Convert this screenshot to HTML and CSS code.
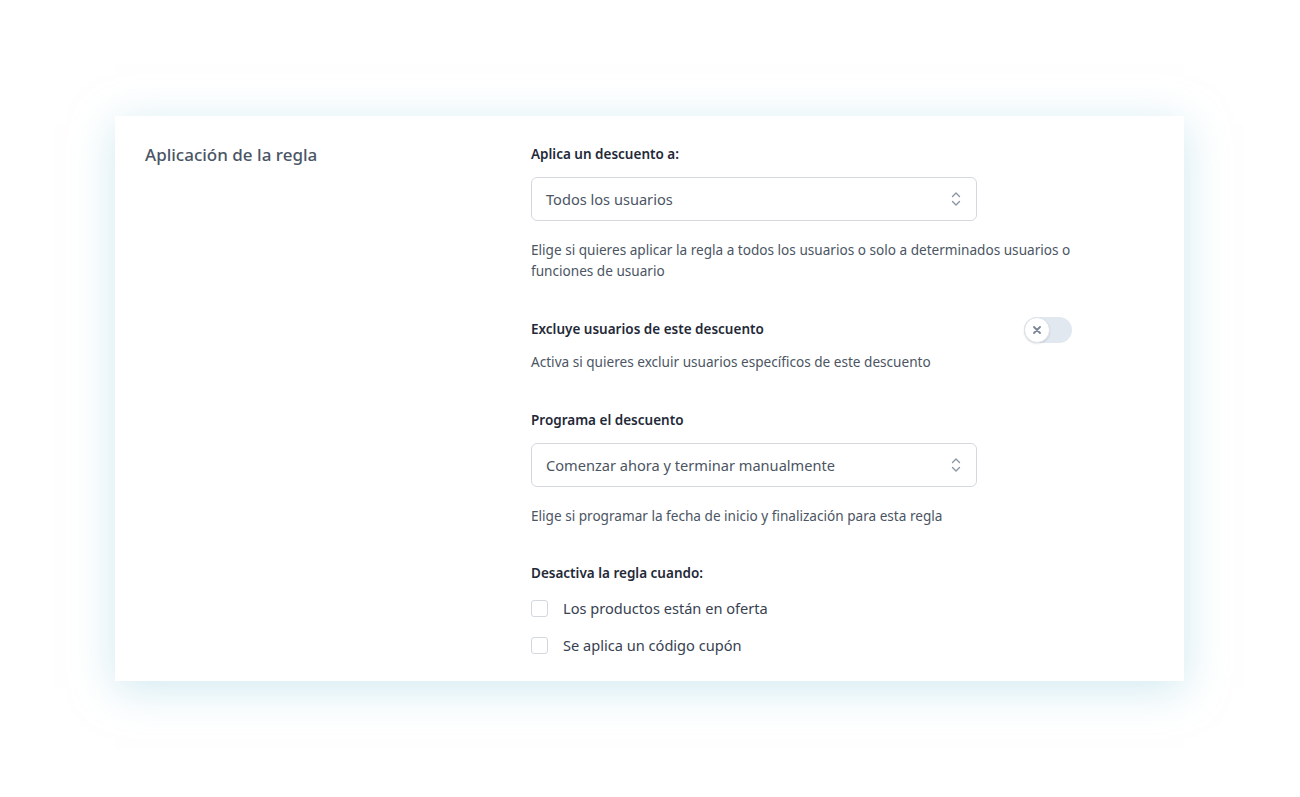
FILE: index.html
```html
<!DOCTYPE html>
<html lang="es">
<head>
    <meta charset="UTF-8">
    <meta name="viewport" content="width=device-width, initial-scale=1.0">
    <title>Aplicación de la regla</title>
    <link rel="stylesheet" href="styles.css">
</head>
<body>
    <div class="card">
        <h2 class="section-title">Aplicación de la regla</h2>

        <div class="fields">
            <div class="field">
                <label class="field-label">Aplica un descuento a:</label>
                <div class="select">
                    <span>Todos los usuarios</span>
                    <svg class="chevrons" width="10" height="16" viewBox="0 0 10 16">
                        <path d="M1.5 5.5 L5 2 L8.5 5.5" />
                        <path d="M1.5 10.5 L5 14 L8.5 10.5" />
                    </svg>
                </div>
                <p class="help">Elige si quieres aplicar la regla a todos los usuarios o solo a determinados usuarios o funciones de usuario</p>
            </div>

            <div class="field">
                <div class="toggle-row">
                    <label class="field-label">Excluye usuarios de este descuento</label>
                    <div class="toggle">
                        <span class="knob">
                            <svg width="8" height="8" viewBox="0 0 8 8">
                                <path d="M1 1 L7 7 M7 1 L1 7" />
                            </svg>
                        </span>
                    </div>
                </div>
                <p class="help help-tight">Activa si quieres excluir usuarios específicos de este descuento</p>
            </div>

            <div class="field field-short">
                <label class="field-label">Programa el descuento</label>
                <div class="select">
                    <span>Comenzar ahora y terminar manualmente</span>
                    <svg class="chevrons" width="10" height="16" viewBox="0 0 10 16">
                        <path d="M1.5 5.5 L5 2 L8.5 5.5" />
                        <path d="M1.5 10.5 L5 14 L8.5 10.5" />
                    </svg>
                </div>
                <p class="help">Elige si programar la fecha de inicio y finalización para esta regla</p>
            </div>

            <div class="field last">
                <label class="field-label">Desactiva la regla cuando:</label>
                <div class="checks">
                    <label class="check"><span class="box"></span>Los productos están en oferta</label>
                    <label class="check"><span class="box"></span>Se aplica un código cupón</label>
                </div>
            </div>
        </div>
    </div>
</body>
</html>
```

FILE: styles.css
```css
html, body {
    height: 100%;
}

body {
    margin: 0;
    padding: 116px 0 0 115px;
    box-sizing: border-box;
    background: #ffffff;
    font-family: 'Noto Sans', 'Open Sans', sans-serif;
    color: #374151;
}

.card {
    width: 1069px;
    box-sizing: border-box;
    padding: 28px 30px 23px;
    background: #ffffff;
    box-shadow: 0 8px 40px rgba(170, 215, 230, 0.55);
    display: grid;
    grid-template-columns: 386px 541px;
}

.section-title {
    margin: -1px 0 0;
    font-size: 17px;
    line-height: 24px;
    font-weight: 500;
    color: #4a5565;
}

.field {
    margin-bottom: 38px;
}

.field.field-short {
    margin-bottom: 37px;
}

.field.last {
    margin-bottom: 0;
}

.field-label {
    display: block;
    font-size: 13.5px;
    line-height: 20px;
    font-weight: 600;
    color: #1f2937;
}

.select {
    margin-top: 13px;
    width: 446px;
    height: 44px;
    box-sizing: border-box;
    border: 1px solid #d5d9df;
    border-radius: 6px;
    padding: 0 14px;
    display: flex;
    align-items: center;
    justify-content: space-between;
    font-size: 14.6px;
    color: #4b5563;
}

.chevrons {
    fill: none;
    stroke: #8b95a3;
    stroke-width: 1.4;
    stroke-linecap: round;
    stroke-linejoin: round;
    margin-right: 1px;
}

.help {
    margin: 18px 0 0;
    font-size: 13.6px;
    line-height: 21px;
    color: #4b5563;
}

.help-tight {
    margin-top: 12px;
}

.toggle-row {
    display: flex;
    align-items: center;
    justify-content: space-between;
    height: 20px;
}

.toggle {
    width: 48px;
    height: 26px;
    border-radius: 13px;
    background: #e2e8f0;
    display: flex;
    align-items: center;
    margin-top: 2px;
}

.knob {
    width: 26px;
    height: 26px;
    box-sizing: border-box;
    border-radius: 50%;
    background: #ffffff;
    border: 1px solid #dde2e8;
    box-shadow: 0 1px 2px rgba(0, 0, 0, 0.1);
    display: flex;
    align-items: center;
    justify-content: center;
}

.knob svg {
    stroke: #7b8594;
    stroke-width: 1.8;
    stroke-linecap: round;
}

.checks {
    margin-top: 12px;
    display: flex;
    flex-direction: column;
    gap: 11px;
}

.check {
    display: flex;
    align-items: center;
    height: 26px;
    font-size: 14.6px;
    color: #374151;
}

.box {
    width: 17px;
    height: 17px;
    box-sizing: border-box;
    border: 1px solid #d3d8de;
    border-radius: 3px;
    margin-right: 15px;
}
```
